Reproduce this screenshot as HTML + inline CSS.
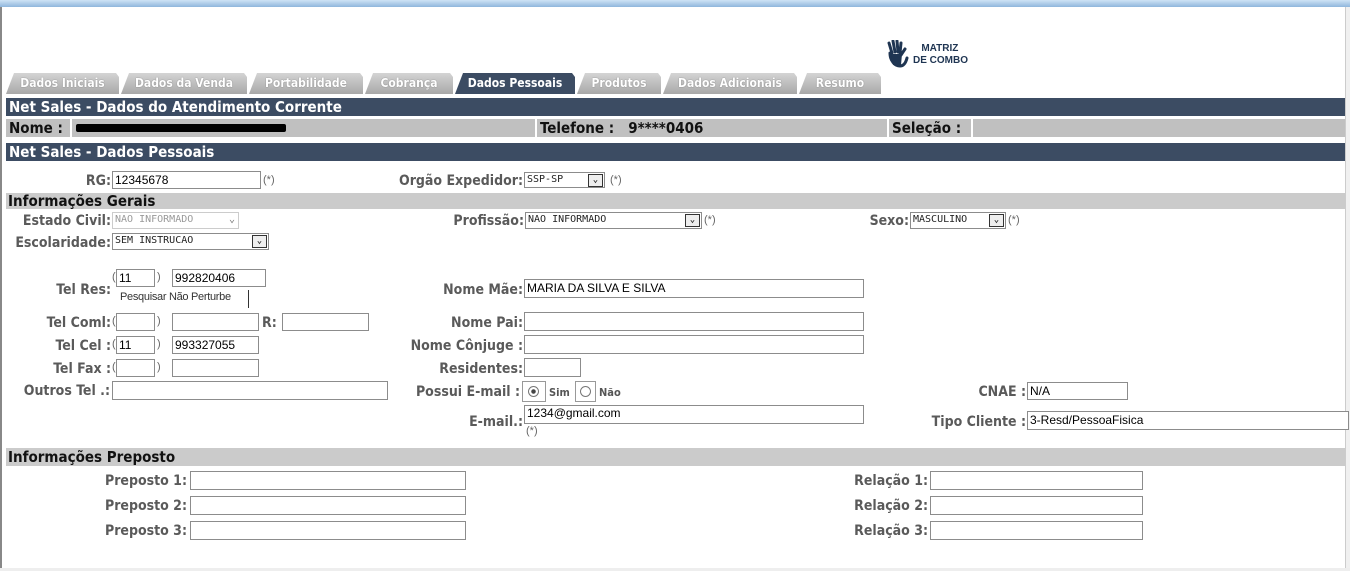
<!DOCTYPE html>
<html><head><meta charset="utf-8"><style>
*{margin:0;padding:0;box-sizing:border-box}
body{width:1350px;height:571px;background:#fff;position:relative;overflow:hidden;font-family:"DejaVu Sans Condensed","Liberation Sans",sans-serif}
.a{position:absolute}
.l{position:absolute;font-weight:bold;font-size:14px;color:#5a5a5a;white-space:nowrap;text-align:right;line-height:16px;margin-top:1px}
.i{position:absolute;border:1px solid #8c8c8c;background:#fff;font-size:12px;line-height:16px;padding-left:2px;color:#000;font-family:"Liberation Sans",sans-serif;white-space:nowrap;overflow:hidden}
.s{position:absolute;border:1px solid #8c8c8c;background:#fff;font-size:10px;line-height:14px;padding-left:2px;font-family:"DejaVu Sans Mono",monospace;color:#222;white-space:nowrap}
.s b{position:absolute;right:1px;top:1px;width:15px;height:13px;border:1px solid #333;background:#eee;font-size:9px;line-height:11px;text-align:center;font-weight:bold}
.p{position:absolute;font-size:11px;color:#666;font-family:"Liberation Sans",sans-serif}
.bar{position:absolute;left:6px;width:1339px;background:#3c4c63;color:#fff;font-weight:bold;font-size:15px;line-height:19px;padding-left:3px}
.gb{position:absolute;left:6px;width:1339px;background:#cbcbcb;color:#111;font-weight:bold;font-size:15px;line-height:17px;padding-left:2px}
.t{position:absolute;top:73px;height:21px;background:linear-gradient(#d4d4d4,#a8a8a8);color:#fff;font-size:12px;font-weight:bold;line-height:21px;text-align:center;clip-path:polygon(8px 0,calc(100% - 3px) 0,100% 4px,100% 100%,0 100%);text-shadow:0 0 1px #666}
.t.on{background:#3c4c63;color:#fff;text-shadow:none}
.g{position:absolute;background:#c0c0c0;top:119px;height:18px;font-weight:bold;font-size:15px;line-height:18px;color:#111;padding-left:3px}
</style></head><body>
<div class="a" style="left:0;top:0;width:1350px;height:7px;background:linear-gradient(#cfe3f5,#8fb6dc)"></div>
<div class="a" style="left:0;top:7px;width:2px;height:564px;background:#888"></div>
<div class="a" style="left:1345px;top:7px;width:5px;height:564px;background:#f0f0f0;border-left:1px solid #ccc"></div>
<div class="a" style="left:0;top:568px;width:1350px;height:3px;background:#eee"></div>

<svg class="a" style="left:883px;top:40px" width="30" height="28" viewBox="0 0 30 28"><path d="M6 3l3 10M10 1l2 11M14 1l1 11M18 3l-1 10M22 9l-4 6M7 13c0 8 5 13 10 13 4 0 6-4 7-8" stroke="#1f3552" stroke-width="3" fill="none" stroke-linecap="round"/><path d="M8 14h11l-1 11H10z" fill="#1f3552"/></svg>
<div class="a" style="left:913px;top:43px;font:bold 10px 'Liberation Sans',sans-serif;color:#1f3552;line-height:12px">&nbsp;&nbsp;&nbsp;MATRIZ<br>DE COMBO</div>

<div class="t" style="left:6px;width:113px">Dados Iniciais</div>
<div class="t" style="left:121px;width:126px">Dados da Venda</div>
<div class="t" style="left:249px;width:114px">Portabilidade</div>
<div class="t" style="left:365px;width:88px">Cobrança</div>
<div class="t on" style="left:455px;width:120px">Dados Pessoais</div>
<div class="t" style="left:577px;width:84px">Produtos</div>
<div class="t" style="left:663px;width:134px">Dados Adicionais</div>
<div class="t" style="left:799px;width:82px">Resumo</div>

<div class="bar" style="top:98px;height:18px">Net Sales - Dados do Atendimento Corrente</div>
<div class="g" style="left:6px;width:64px">Nome :</div>
<div class="g" style="left:72px;width:463px"><span class="a" style="left:4px;top:5px;width:210px;height:8px;background:#000;border-radius:2px"></span></div>
<div class="g" style="left:537px;width:350px">Telefone :&nbsp;&nbsp;&nbsp;9****0406</div>
<div class="g" style="left:889px;width:82px">Seleção :</div>
<div class="g" style="left:973px;width:372px"></div>
<div class="bar" style="top:143px;height:18px">Net Sales - Dados Pessoais</div>

<div class="l" style="right:1239px;top:172px">RG:</div>
<div class="i" style="left:112px;top:171px;width:149px;height:18px">12345678</div>
<div class="p" style="left:263px;top:174px">(*)</div>
<div class="l" style="right:827px;top:172px">Orgão Expedidor:</div>
<div class="s" style="left:524px;top:172px;width:81px;height:16px">SSP-SP<b>⌄</b></div>
<div class="p" style="left:610px;top:174px">(*)</div>

<div class="gb" style="top:193px;height:16px">Informações Gerais</div>
<div class="l" style="right:1239px;top:212px">Estado Civil:</div>
<div class="s" style="left:112px;top:212px;width:127px;height:17px;color:#999;border-color:#ccc">NAO INFORMADO<span class="a" style="right:3px;top:0;color:#777">⌄</span></div>
<div class="l" style="right:826px;top:212px">Profissão:</div>
<div class="s" style="left:525px;top:212px;width:177px;height:17px">NAO INFORMADO<b>⌄</b></div>
<div class="p" style="left:704px;top:214px">(*)</div>
<div class="l" style="right:441px;top:212px">Sexo:</div>
<div class="s" style="left:910px;top:212px;width:96px;height:17px">MASCULINO<b>⌄</b></div>
<div class="p" style="left:1008px;top:214px">(*)</div>
<div class="l" style="right:1239px;top:234px">Escolaridade:</div>
<div class="s" style="left:112px;top:233px;width:157px;height:17px">SEM INSTRUCAO<b>⌄</b></div>

<div class="l" style="right:1239px;top:281px">Tel Res:</div>
<div class="p" style="left:112px;top:271px">(</div><div class="i" style="left:116px;top:269px;width:39px;height:18px">11</div><div class="p" style="left:157px;top:271px">)</div>
<div class="i" style="left:172px;top:269px;width:94px;height:18px">992820406</div>
<div class="a" style="left:120px;top:291px;font:11px 'Liberation Sans',sans-serif;color:#333;letter-spacing:-.3px">Pesquisar Não Perturbe</div>
<div class="a" style="left:248px;top:290px;width:1px;height:18px;background:#333"></div>
<div class="l" style="right:827px;top:281px">Nome Mãe:</div>
<div class="i" style="left:524px;top:279px;width:340px;height:19px">MARIA DA SILVA E SILVA</div>

<div class="l" style="right:1239px;top:314px">Tel Coml:</div>
<div class="p" style="left:112px;top:315px">(</div><div class="i" style="left:116px;top:313px;width:39px;height:18px"></div><div class="p" style="left:157px;top:315px">)</div>
<div class="i" style="left:172px;top:313px;width:87px;height:18px"></div>
<div class="l" style="left:262px;top:314px">R:</div>
<div class="i" style="left:282px;top:313px;width:87px;height:18px"></div>
<div class="l" style="right:827px;top:314px">Nome Pai:</div>
<div class="i" style="left:524px;top:312px;width:340px;height:19px"></div>

<div class="l" style="right:1239px;top:337px">Tel Cel :</div>
<div class="p" style="left:112px;top:338px">(</div><div class="i" style="left:116px;top:336px;width:39px;height:18px">11</div><div class="p" style="left:157px;top:338px">)</div>
<div class="i" style="left:172px;top:336px;width:87px;height:18px">993327055</div>
<div class="l" style="right:827px;top:337px">Nome Cônjuge :</div>
<div class="i" style="left:524px;top:335px;width:340px;height:19px"></div>

<div class="l" style="right:1239px;top:360px">Tel Fax :</div>
<div class="p" style="left:112px;top:361px">(</div><div class="i" style="left:116px;top:359px;width:39px;height:18px"></div><div class="p" style="left:157px;top:361px">)</div>
<div class="i" style="left:172px;top:359px;width:87px;height:18px"></div>
<div class="l" style="right:827px;top:360px">Residentes:</div>
<div class="i" style="left:524px;top:358px;width:57px;height:19px"></div>

<div class="l" style="right:1240px;top:382px">Outros Tel .:</div>
<div class="i" style="left:112px;top:381px;width:276px;height:19px"></div>
<div class="l" style="right:830px;top:383px">Possui E-mail :</div>
<div class="a" style="left:522px;top:381px;width:24px;height:21px;border:1px solid #999"><span class="a" style="left:5px;top:4px;width:11px;height:11px;border:1px solid #777;border-radius:50%;background:radial-gradient(#444 30%,#fff 40%)"></span></div>
<div class="a" style="left:549px;top:386px;font:bold 11px 'DejaVu Sans Condensed',sans-serif;color:#555">Sim</div>
<div class="a" style="left:575px;top:381px;width:21px;height:21px;border:1px solid #999"><span class="a" style="left:4px;top:4px;width:11px;height:11px;border:1px solid #777;border-radius:50%"></span></div>
<div class="a" style="left:599px;top:386px;font:bold 11px 'DejaVu Sans Condensed',sans-serif;color:#555">Não</div>
<div class="l" style="right:324px;top:383px">CNAE :</div>
<div class="i" style="left:1027px;top:382px;width:101px;height:18px">N/A</div>

<div class="l" style="right:827px;top:413px">E-mail.:</div>
<div class="i" style="left:524px;top:405px;width:340px;height:19px;line-height:15px">1234@gmail.com</div>
<div class="p" style="left:526px;top:425px">(*)</div>
<div class="l" style="right:324px;top:413px">Tipo Cliente :</div>
<div class="i" style="left:1027px;top:411px;width:322px;height:19px">3-Resd/PessoaFisica</div>

<div class="gb" style="top:448px;height:18px;line-height:18px">Informações Preposto</div>
<div class="l" style="right:1163px;top:472px">Preposto 1:</div>
<div class="i" style="left:190px;top:471px;width:276px;height:19px"></div>
<div class="l" style="right:1163px;top:497px">Preposto 2:</div>
<div class="i" style="left:190px;top:496px;width:276px;height:19px"></div>
<div class="l" style="right:1163px;top:522px">Preposto 3:</div>
<div class="i" style="left:190px;top:521px;width:276px;height:19px"></div>
<div class="l" style="right:422px;top:472px">Relação 1:</div>
<div class="i" style="left:930px;top:471px;width:213px;height:19px"></div>
<div class="l" style="right:422px;top:497px">Relação 2:</div>
<div class="i" style="left:930px;top:496px;width:213px;height:19px"></div>
<div class="l" style="right:422px;top:522px">Relação 3:</div>
<div class="i" style="left:930px;top:521px;width:213px;height:19px"></div>
</body></html>
